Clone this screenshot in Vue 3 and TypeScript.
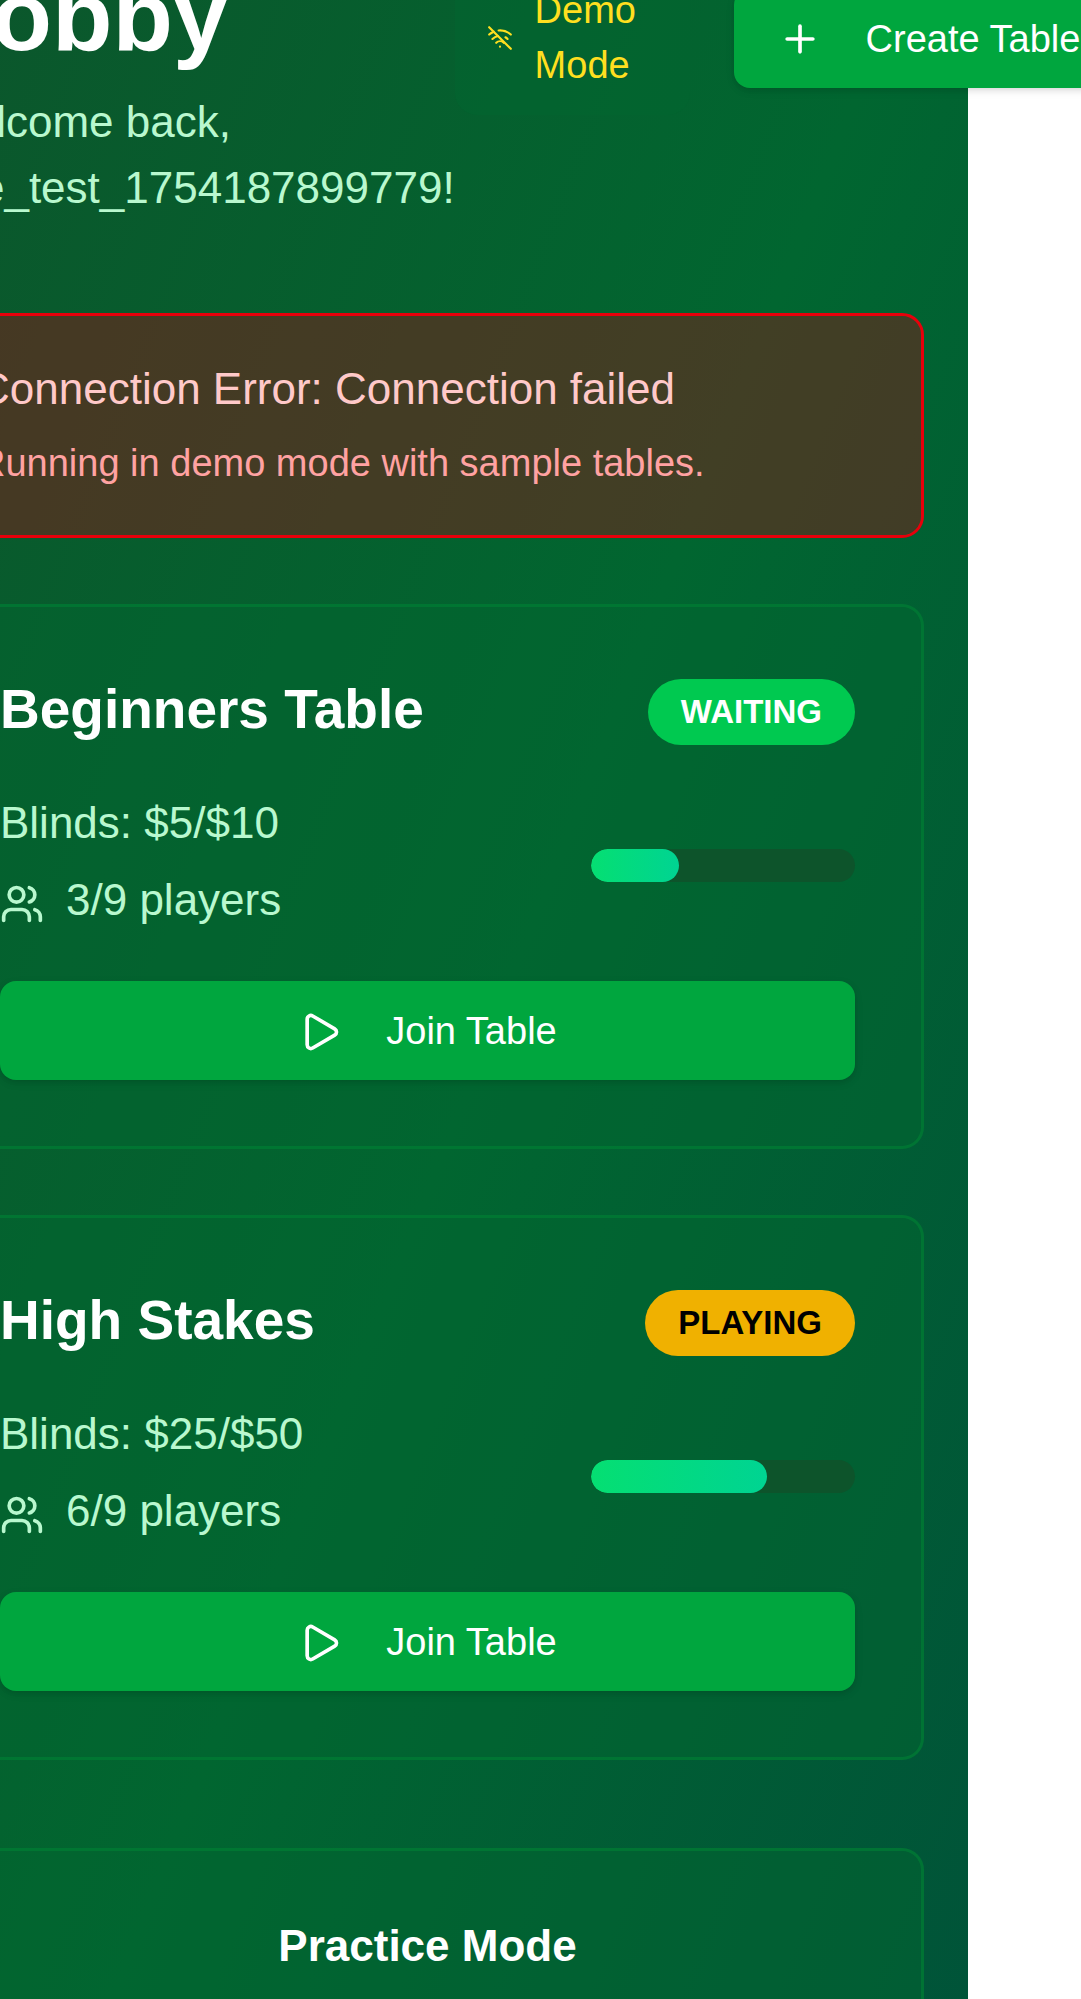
<script setup lang="ts">
interface PokerTable {
  id: number
  name: string
  blinds: string
  players: number
  seats: number
  status: 'waiting' | 'playing'
}

const username = 'e2e_test_1754187899779'

const tables: PokerTable[] = [
  { id: 1, name: 'Beginners Table', blinds: '$5/$10', players: 3, seats: 9, status: 'waiting' },
  { id: 2, name: 'High Stakes', blinds: '$25/$50', players: 6, seats: 9, status: 'playing' },
]

const fillWidth = (t: PokerTable): string => `${(t.players / t.seats) * 100}%`
</script>

<template>
  <div class="viewport">
    <main class="page">
      <header class="header">
        <div class="intro">
          <h1>Lobby</h1>
          <p>Welcome back, {{ username }}!</p>
        </div>
        <div class="actions">
          <div class="demo">
            <svg class="icon demo-icon" viewBox="0 0 24 24" aria-hidden="true">
              <path d="M12 20h.01" />
              <path d="M8.5 16.429a5 5 0 0 1 7 0" />
              <path d="M5 12.859a10 10 0 0 1 5.17-2.69" />
              <path d="M19 12.859a10 10 0 0 0-2.007-1.523" />
              <path d="M2 8.82a15 15 0 0 1 4.177-2.643" />
              <path d="M22 8.82a15 15 0 0 0-11.288-3.764" />
              <path d="m2 2 20 20" />
            </svg>
            <span>Demo Mode</span>
          </div>
          <button type="button" class="btn">
            <svg class="icon" viewBox="0 0 24 24" aria-hidden="true">
              <path d="M5 12h14" />
              <path d="M12 5v14" />
            </svg>
            Create Table
          </button>
        </div>
      </header>

      <section class="alert" role="alert">
        <p class="alert-title">Connection Error: Connection failed</p>
        <p class="alert-note">Running in demo mode with sample tables.</p>
      </section>

      <section class="tables">
        <article v-for="t in tables" :key="t.id" class="card">
          <div class="card-head">
            <h2>{{ t.name }}</h2>
            <span class="status" :class="t.status">{{ t.status.toUpperCase() }}</span>
          </div>
          <div class="card-body">
            <div class="stats">
              <p class="stat">Blinds: {{ t.blinds }}</p>
              <div class="seats">
                <svg class="icon" viewBox="0 0 24 24" aria-hidden="true">
                  <path d="M16 21v-2a4 4 0 0 0-4-4H6a4 4 0 0 0-4 4v2" />
                  <path d="M16 3.128a4 4 0 0 1 0 7.744" />
                  <path d="M22 21v-2a4 4 0 0 0-3-3.87" />
                  <circle cx="9" cy="7" r="4" />
                </svg>
                <span class="stat">{{ t.players }}/{{ t.seats }} players</span>
              </div>
            </div>
            <div
              class="bar"
              role="progressbar"
              :aria-valuenow="t.players"
              aria-valuemin="0"
              :aria-valuemax="t.seats"
            >
              <div class="fill" :style="{ width: fillWidth(t) }"></div>
            </div>
          </div>
          <button type="button" class="btn">
            <svg class="icon" viewBox="0 0 24 24" aria-hidden="true">
              <path
                d="M5 5a2 2 0 0 1 3.008-1.728l11.997 6.998a2 2 0 0 1 .003 3.458l-12 7A2 2 0 0 1 5 19z"
              />
            </svg>
            Join Table
          </button>
        </article>
      </section>

      <section class="card practice">
        <h3>Practice Mode</h3>
      </section>
    </main>
  </div>
</template>

<style>
body {
  margin: 0;
  background: #fff;
}
</style>

<style scoped>
* {
  box-sizing: border-box;
}

h1,
h2,
h3,
p {
  margin: 0;
}

.viewport {
  height: 100vh;
  overflow: hidden;
  font-family: 'Liberation Sans', Arial, sans-serif;
  font-size: 44px;
  line-height: 66px;
  color: #fff;
}

/* The lobby is panned right and down inside the viewport. */
.page {
  width: 100%;
  margin: -190px 0 0 -113px;
  padding: 151px 44px 88px;
  background: linear-gradient(to bottom right, #0d542b, #016630, #004f3b);
}

.header {
  display: flex;
  align-items: flex-start;
  justify-content: space-between;
  margin-bottom: 92px;
}

.intro {
  color: #b9f8cf;
}

h1 {
  margin-bottom: 18px;
  font-size: 99px;
  line-height: 110px;
  color: #fff;
}

.actions {
  display: flex;
  flex: none;
  align-items: center;
  gap: 44px;
}

.demo {
  display: flex;
  align-items: center;
  gap: 22px;
  width: 235px;
  padding: 22px 32px;
  border-radius: 22px;
  background: rgba(1, 102, 48, 0.5);
  font-size: 38px;
  line-height: 55px;
  color: #ffdf20;
}

.icon {
  flex: none;
  width: 44px;
  height: 44px;
  fill: none;
  stroke: currentColor;
  stroke-width: 2;
  stroke-linecap: round;
  stroke-linejoin: round;
}

.demo-icon {
  width: 26px;
}

.btn {
  display: flex;
  flex: none;
  align-items: center;
  justify-content: center;
  gap: 44px;
  height: 99px;
  padding: 2px 44px 0;
  border: 0;
  border-radius: 16px;
  background: #00a63e;
  box-shadow:
    0 3px 8px rgba(0, 0, 0, 0.1),
    0 3px 6px -3px rgba(0, 0, 0, 0.1);
  font-family: inherit;
  font-size: 38px;
  line-height: 55px;
  color: #fff;
  white-space: nowrap;
}

.alert {
  display: flex;
  flex-direction: column;
  gap: 18px;
  margin-bottom: 66px;
  padding: 44px;
  border: 3px solid #e7000b;
  border-radius: 22px;
  background: rgba(130, 24, 26, 0.5);
  background-clip: padding-box;
}

.alert-title {
  line-height: 58px;
  color: #ffc9c9;
}

.alert-note {
  font-size: 38px;
  line-height: 55px;
  color: #ffa2a2;
}

.tables {
  display: flex;
  flex-direction: column;
  gap: 66px;
  margin-bottom: 88px;
}

.card {
  display: flex;
  flex-direction: column;
  gap: 44px;
  padding: 66px;
  border: 3px solid rgba(0, 130, 54, 0.6);
  border-radius: 22px;
  background: rgba(1, 102, 48, 0.5);
}

.card-head,
.card-body {
  display: flex;
  align-items: center;
  justify-content: space-between;
}

h2 {
  padding-bottom: 5px;
  font-size: 55px;
  line-height: 72px;
}

.status {
  padding: 0 33px;
  border-radius: 33px;
  font-size: 33px;
  font-weight: 700;
}

.waiting {
  background: #00c950;
}

.playing {
  background: #f0b100;
  color: #000;
}

.stats {
  display: flex;
  flex-direction: column;
  gap: 11px;
  color: #b9f8cf;
}

.seats {
  display: flex;
  align-items: center;
  gap: 22px;
}

.stat {
  padding-bottom: 8px;
  line-height: 58px;
}

.bar {
  width: 264px;
  height: 33px;
  border-radius: 17px;
  overflow: hidden;
  background: #0d542b;
}

.fill {
  height: 100%;
  border-radius: 17px;
  background: linear-gradient(to right, #05df72, #00d492);
}

.practice {
  min-height: 640px;
}

h3 {
  font-size: 44px;
  line-height: 58px;
  text-align: center;
}
</style>
